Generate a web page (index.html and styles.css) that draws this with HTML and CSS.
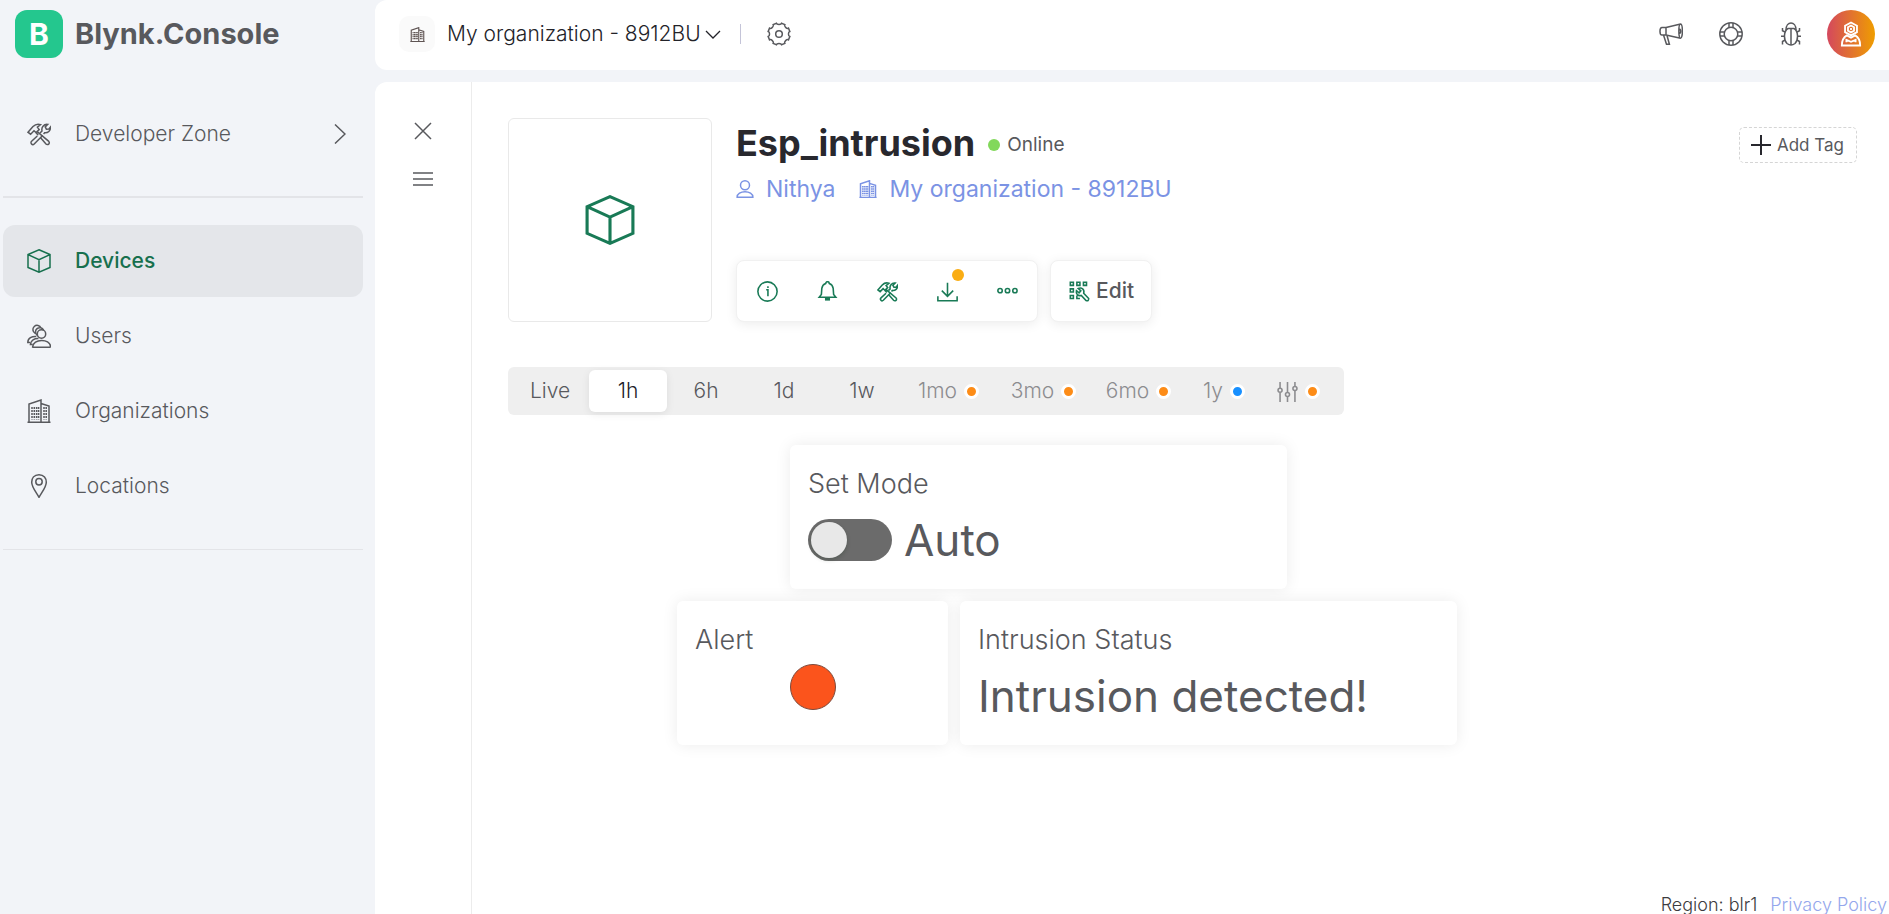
FILE: index.html
```html
<!DOCTYPE html>
<html lang="en">
<head>
<meta charset="utf-8">
<title>Blynk.Console</title>
<link rel="stylesheet" href="styles.css">
</head>
<body>
<svg class="sprite" aria-hidden="true">
  <symbol id="tools" viewBox="0 0 24 24">
    <path d="M1 10.2 6 4.6C8.3 2.2 11 1.7 13.6 2.6L10.4 5.2 12.2 7.6 9 10.6 7 8.8 3.6 12.2Z"/>
    <path d="M10.2 9.6 21.8 19.4A1.9 1.9 0 0 1 19 22L13.4 15.6M11.2 13.2 9 10.6"/>
    <path d="M10.3 14 4.6 19.2A1.9 1.9 0 0 0 7.2 22L15.6 13.4M13 11 15 9C14.200 5.400 16.600 2 20.700 2.400L18.200 4.900 19.400 7.200 21.800 7.100 23.400 5.100C23.800 8.800 20.800 11.200 17.600 10.800L16.600 12"/>
  </symbol>
  <symbol id="cube" viewBox="0 0 24 24">
    <path d="M12 .8 23 5.600V18.400L12 23.200 1 18.400V5.600ZM1 5.600 12 10.600 23 5.600M12 10.600V23.200"/>
  </symbol>
  <symbol id="users" viewBox="0 0 24 24">
    <circle cx="14.500" cy="10" r="4.200"/>
    <path d="M5.600 23C6 14.300 23 14.300 23.500 22.300L23 23.200H6Z"/>
    <path d="M10.400 11.400A4.200 4.200 0 1 1 16.600 6.300M8.200 9.300A4.200 4.200 0 1 1 14 4M5.700 20.600H3.400C3.600 16 7.600 14.400 11.500 14.600M3.200 18.500H.8C.8 14 5 12.200 9.300 12.500"/>
  </symbol>
  <symbol id="building" viewBox="0 0 24 24">
    <path d="M.5 23.200H23.500M2 23V5L14 1V23M14 4.500 22 7V23"/>
    <path d="M5 8V20.500M7.300 8V20.500M9.600 8V20.500M11.600 8V20.500M17 8V20.500M19.200 8V20.500" stroke-dasharray="2 1"/>
  </symbol>
  <symbol id="pin" viewBox="0 0 24 24">
    <path d="M12 .8C7 .8 4.700 4.500 4.700 8.200 4.700 13 9 18 12 23.300 15 18 19.300 13 19.300 8.200 19.300 4.500 17 .8 12 .8Z"/>
    <circle cx="12" cy="7.800" r="3.200"/>
  </symbol>
  <symbol id="gear" viewBox="0 0 24 24">
    <path d="M9.400 1.200C9.800 3 14.200 3 14.600 1.200L17.800 2.500C16.800 4.200 19.800 7.200 21.500 6.200L22.800 9.400C21 9.800 21 14.200 22.800 14.600L21.500 17.800C19.800 16.800 16.800 19.800 17.800 21.500L14.600 22.800C14.200 21 9.800 21 9.400 22.800L6.200 21.500C7.200 19.800 4.200 16.800 2.500 17.800L1.200 14.600C3 14.200 3 9.800 1.200 9.400L2.500 6.200C4.200 7.200 7.200 4.200 6.200 2.500Z"/>
    <circle cx="12" cy="12" r="3.300"/>
  </symbol>
  <symbol id="megaphone" viewBox="0 0 24 24">
    <path d="M7 5.500H3C.3 5.500.3 13 3 13H7ZM7 5.500 21.500 2C24 2 24 16.500 21.500 16.300L7 13M21.500 2C19.300 2 19.300 16.500 21.500 16.300M4.500 13 7.500 22.200H10.400L8 13.500M20 7C22.200 7 22.200 11.500 20 11.500"/>
  </symbol>
  <symbol id="lifebuoy" viewBox="0 0 24 24">
    <circle cx="12" cy="12" r="11.200"/><circle cx="12" cy="12" r="6.800"/>
    <path d="M10 1V5.500M14 1V5.500M10 18.500V23M14 18.500V23M1 10H5.500M1 14H5.500M18.500 10H23M18.500 14H23"/>
  </symbol>
  <symbol id="bug" viewBox="0 0 24 24">
    <path d="M7 8C7 -1.300 17 -1.300 17 8"/>
    <path d="M9 6.500C4.500 9 4.500 18 8 21.500Q12 24.500 16 21.500C19.500 18 19.500 9 15 6.500Z"/>
    <path d="M12 6.500V23M6 10 3.500 8.800V6M18 10 20.500 8.800V6M5.500 14.300H2M18.500 14.300H22M6 18 3.500 19.500V22.500M18 18 20.500 19.500V22.500"/>
  </symbol>
  <symbol id="astronaut" viewBox="0 0 24 28">
    <path d="M12 1.500 18.500 5V12L12 15.500 5.500 12V5ZM12 4.800 15.300 6.700V10.300L12 12.200 8.700 10.300V6.700Z"/>
    <path d="M12 7.500V9.500M7.500 15.500C4 17.500 2 20.500 2 26.500H22C22 20.500 20 17.500 16.500 15.500L12 18ZM7 23V20.500L12 22.500 17 20.500V23"/>
  </symbol>
  <symbol id="person" viewBox="0 0 24 24">
    <circle cx="12" cy="7" r="6"/>
    <path d="M1.500 23C1 13 23 13 22.500 23Z"/>
  </symbol>
  <symbol id="info" viewBox="0 0 24 24">
    <circle cx="12" cy="12" r="11"/>
    <path d="M10.500 10H12.500V17.500M12.500 6V8"/>
  </symbol>
  <symbol id="bell" viewBox="0 0 24 24">
    <path d="M2.500 18.500 5 15.500 5.500 8.500C6 5 8 3.500 10 2.800A2 2 0 0 1 14 2.800C16 3.500 18 5 18.500 8.500L19 15.500 21.500 18.500Z"/>
    <path d="M10 20H14V21.500H10Z"/>
  </symbol>
  <symbol id="download" viewBox="0 0 24 24">
    <path d="M12 2V17M5.500 11 12 17.500 18.500 11M1 17.500V22.500H23V17.500"/>
  </symbol>
  <symbol id="dots" viewBox="0 0 24 24">
    <circle cx="3.500" cy="11" r="2.500"/><circle cx="12" cy="11" r="2.500"/><circle cx="20.500" cy="11" r="2.500"/>
  </symbol>
  <symbol id="widgets" viewBox="0 0 24 24">
    <path d="M1.500 1.500H5V5H1.500ZM9 1.500H12.500V5H9ZM16.500 1.500H20V5H16.500ZM1.500 9H5V12.500H1.500ZM1.500 16.500H5V20H1.500Z"/>
    <path d="M10.500 8.500 13.500 11.200 11.500 13.500 8.500 11C7.500 15 10.500 17.500 14 16.500L19.500 22.300Q22.500 23.500 22.500 20L16.800 14C18 9.500 14.500 7 10.500 8.500ZM9 16.500V20H12.500"/>
  </symbol>
  <symbol id="sliders" viewBox="0 0 24 24">
    <path d="M3.500 1V8M3.500 13V24M12 1V13M12 18V24M20.500 1V6M20.500 11V24"/>
    <circle cx="3.500" cy="10.500" r="2.300"/><circle cx="12" cy="15.500" r="2.300"/><circle cx="20.500" cy="8.500" r="2.300"/>
  </symbol>
</svg>

<div class="app">
  <aside class="sidebar">
    <a class="brand" href="#"><span class="brand-mark">B</span><span class="brand-name">Blynk.Console</span></a>
    <nav class="nav">
      <a class="nav-item zone" href="#">
        <svg class="icon"><use href="#tools"/></svg><span class="nav-label">Developer Zone</span>
        <svg class="zone-arrow" viewBox="0 0 12 20"><path d="M1 .5 11 10 1 19.500"/></svg>
      </a>
      <hr class="rule thick">
      <a class="nav-item active" href="#"><svg class="icon"><use href="#cube"/></svg><span class="nav-label">Devices</span></a>
      <a class="nav-item" href="#"><svg class="icon"><use href="#users"/></svg><span class="nav-label">Users</span></a>
      <a class="nav-item" href="#"><svg class="icon"><use href="#building"/></svg><span class="nav-label">Organizations</span></a>
      <a class="nav-item" href="#"><svg class="icon"><use href="#pin"/></svg><span class="nav-label">Locations</span></a>
      <hr class="rule">
    </nav>
  </aside>

  <div class="workspace">
    <header class="topbar">
      <button class="org-switch" type="button">
        <span class="org-badge"><svg class="icon-sm"><use href="#building"/></svg></span>
        <span>My organization - 8912BU</span>
        <svg class="chevron" viewBox="0 0 16 9"><path d="M1 1 8 8 15 1"/></svg>
      </button>
      <span class="separator"></span>
      <button class="icon-button" type="button" aria-label="Settings"><svg class="icon"><use href="#gear"/></svg></button>
      <div class="top-actions">
        <button class="icon-button" type="button" aria-label="News"><svg class="icon"><use href="#megaphone"/></svg></button>
        <button class="icon-button" type="button" aria-label="Help"><svg class="icon"><use href="#lifebuoy"/></svg></button>
        <button class="icon-button" type="button" aria-label="Report a bug"><svg class="icon"><use href="#bug"/></svg></button>
        <button class="avatar" type="button" aria-label="Profile"><svg class="avatar-icon"><use href="#astronaut"/></svg></button>
      </div>
    </header>

    <div class="panel">
      <div class="rail">
        <button class="icon-button" type="button" aria-label="Close"><svg class="rail-icon" viewBox="0 0 20 20"><path d="M2 2 18 18M18 2 2 18"/></svg></button>
        <button class="icon-button" type="button" aria-label="Device list"><svg class="rail-icon" viewBox="0 0 20 20"><path d="M0 4H20M0 10H20M0 16H20"/></svg></button>
      </div>

      <main class="content">
        <section class="device">
          <div class="device-image"><svg class="device-cube"><use href="#cube"/></svg></div>
          <div class="device-info">
            <div class="title-row">
              <h1 class="device-name">Esp_intrusion</h1>
              <span class="status"><span class="status-dot"></span>Online</span>
              <button class="add-tag" type="button"><svg class="plus" viewBox="0 0 22 22"><path d="M11 1V21M1 11H21"/></svg>Add Tag</button>
            </div>
            <div class="owner-row">
              <a class="owner" href="#"><svg class="icon-meta"><use href="#person"/></svg>Nithya</a>
              <a class="owner" href="#"><svg class="icon-meta"><use href="#building"/></svg>My organization - 8912BU</a>
            </div>
            <div class="tool-row">
              <div class="toolbar">
                <button class="tool" type="button" aria-label="Info"><svg class="icon-tool"><use href="#info"/></svg></button>
                <button class="tool" type="button" aria-label="Notifications"><svg class="icon-tool"><use href="#bell"/></svg></button>
                <button class="tool" type="button" aria-label="Developer tools"><svg class="icon-tool"><use href="#tools"/></svg></button>
                <button class="tool" type="button" aria-label="Download report"><svg class="icon-tool"><use href="#download"/></svg><span class="tool-badge"></span></button>
                <button class="tool" type="button" aria-label="More"><svg class="icon-tool"><use href="#dots"/></svg></button>
              </div>
              <button class="edit" type="button"><svg class="icon-tool"><use href="#widgets"/></svg>Edit</button>
            </div>
          </div>
        </section>

        <div class="periods">
          <button class="period" type="button">Live</button>
          <button class="period selected" type="button">1h</button>
          <button class="period" type="button">6h</button>
          <button class="period" type="button">1d</button>
          <button class="period" type="button">1w</button>
          <button class="period locked" type="button">1mo<span class="plan"></span></button>
          <button class="period locked" type="button">3mo<span class="plan"></span></button>
          <button class="period locked" type="button">6mo<span class="plan"></span></button>
          <button class="period locked short" type="button">1y<span class="plan blue"></span></button>
          <button class="period locked custom" type="button" aria-label="Custom range"><svg class="icon-tool"><use href="#sliders"/></svg><span class="plan"></span></button>
        </div>

        <section class="dashboard">
          <article class="widget mode">
            <h2 class="widget-title">Set Mode</h2>
            <label class="switch-row"><input class="switch" type="checkbox"><span class="value">Auto</span></label>
          </article>
          <article class="widget alert">
            <h2 class="widget-title">Alert</h2>
            <span class="led"></span>
          </article>
          <article class="widget state">
            <h2 class="widget-title">Intrusion Status</h2>
            <p class="value">Intrusion detected!</p>
          </article>
        </section>

        <footer class="footer"><span>Region: blr1</span><a class="policy" href="#">Privacy Policy</a></footer>
      </main>
    </div>
  </div>
</div>
</body>
</html>
```

FILE: styles.css
```css
* { box-sizing: border-box; }

body {
  margin: 0;
  background: #f2f4f8;
  color: #58595d;
  font-family: Inter, "Liberation Sans", sans-serif;
  font-size: 21px;
  font-weight: 300;
  line-height: 28px;
}

a { color: inherit; text-decoration: none; }

button {
  padding: 0;
  border: 0;
  background: none;
  color: inherit;
  font: inherit;
  cursor: pointer;
}

h1, h2, p { margin: 0; }

svg {
  display: block;
  flex: none;
  fill: none;
  stroke: currentColor;
  stroke-width: 1.5;
}

.sprite { position: absolute; width: 0; height: 0; }
.icon { width: 24px; height: 24px; }
.icon-sm { width: 15px; height: 15px; color: #5f5453; stroke-width: 1.8; }
.icon-meta { width: 18px; height: 18px; stroke-width: 2; }
.icon-tool { width: 21px; height: 21px; stroke-width: 1.8; }

.app { display: flex; min-height: 100vh; }

/* Sidebar */
.sidebar { flex: none; width: 375px; padding: 10px 12px 0 3px; }

.brand { display: flex; align-items: center; gap: 12px; padding-left: 12px; }

.brand-mark {
  width: 48px;
  height: 48px;
  border-radius: 12px;
  background: #24c78e;
  color: #fff;
  font-size: 30px;
  font-weight: 700;
  line-height: 48px;
  text-align: center;
}

.brand-name { font-size: 29px; font-weight: 700; line-height: 48px; }

.nav { display: flex; flex-direction: column; gap: 3px; padding-top: 40px; }

.nav-item {
  display: flex;
  align-items: center;
  gap: 24px;
  height: 72px;
  padding: 0 17px 0 24px;
  border-radius: 12px;
}

.nav-item.active { background: #e4e6ea; color: #17704e; font-weight: 500; }
.zone-arrow { width: 12px; height: 20px; margin-left: auto; }

.rule { width: 100%; height: 1px; margin: 24px 0; border: 0; background: #e3e4e8; }
.rule.thick { height: 2px; margin: 23px 0 24px; }

/* Top bar */
.workspace { display: flex; flex: 1; flex-direction: column; gap: 12px; min-width: 0; }

.topbar {
  display: flex;
  align-items: center;
  height: 70px;
  padding: 0 14px 2px 24px;
  border-radius: 12px 0 0 12px;
  background: #fff;
}

.org-switch { display: flex; align-items: center; gap: 4px; color: #232329; }

.org-badge {
  display: grid;
  place-items: center;
  width: 36px;
  height: 36px;
  margin-right: 8px;
  border-radius: 10px;
  background: #fafafa;
}

.chevron { width: 16px; height: 9px; stroke-width: 1.3; }
.separator { width: 1px; height: 20px; margin: 0 26px 0 19px; background: #c4c4d8; }
.icon-button { display: grid; place-items: center; }
.top-actions { display: flex; align-items: center; gap: 36px; margin-left: auto; }

.avatar {
  display: grid;
  place-items: center;
  width: 48px;
  height: 48px;
  margin-left: -12px;
  border-radius: 50%;
  background: linear-gradient(90deg, #d4485e, #ef9d00);
  color: #fff;
}

.avatar-icon { width: 22px; height: 26px; stroke-width: 2; }

/* Device page */
.panel { display: flex; flex: 1; border-radius: 12px 0 0 0; background: #fff; }

.rail {
  display: flex;
  flex: none;
  flex-direction: column;
  align-items: center;
  gap: 28px;
  width: 97px;
  padding-top: 39px;
  border-right: 1px solid #ececec;
}

.rail-icon { width: 20px; height: 20px; }

.content { display: flex; flex: 1; flex-direction: column; min-width: 0; padding-top: 36px; }

.device { display: flex; gap: 24px; padding: 0 32px 0 36px; }

.device-image {
  display: grid;
  flex: none;
  place-items: center;
  width: 204px;
  height: 204px;
  border: 1px solid #e9e9e9;
  border-radius: 6px;
  color: #197a56;
}

.device-cube { width: 50px; height: 50px; }
.device-info { display: flex; flex: 1; flex-direction: column; min-width: 0; }
.title-row { display: flex; align-items: center; gap: 13px; padding-top: 2px; }

.device-name { color: #28282e; font-size: 36px; font-weight: 700; line-height: 46px; }

.status { display: flex; align-items: center; gap: 7px; padding-top: 4px; font-size: 19px; font-weight: 400; }
.status-dot { width: 12px; height: 12px; border-radius: 50%; background: #82d85b; }

.add-tag {
  display: flex;
  align-items: center;
  gap: 5px;
  height: 36px;
  margin: 4px 0 0 auto;
  padding: 0 12px 0 10px;
  border: 1px dashed #d5d5d5;
  border-radius: 5px;
  font-size: 17px;
  font-weight: 400;
}

.plus { width: 22px; height: 22px; stroke: #28282e; stroke-width: 2; }

.owner-row {
  display: flex;
  gap: 24px;
  padding-top: 7px;
  color: #7b93e4;
  font-size: 23px;
  font-weight: 400;
  line-height: 32px;
}

.owner { display: flex; align-items: center; gap: 12px; }

.tool-row { display: flex; gap: 12px; margin-top: auto; }

.toolbar,
.edit {
  display: flex;
  align-items: center;
  height: 62px;
  border: 1px solid #f1f1f1;
  border-radius: 8px;
  background: #fff;
  box-shadow: 0 2px 12px rgba(0, 0, 0, 0.08);
}

.tool {
  position: relative;
  display: grid;
  place-items: center;
  width: 60px;
  height: 60px;
  color: #197a56;
}

.tool-badge {
  position: absolute;
  top: 8px;
  right: 13px;
  width: 12px;
  height: 12px;
  border-radius: 50%;
  background: #faad14;
}

.edit { gap: 6px; padding: 0 17px 0 18px; font-weight: 500; }
.edit .icon-tool { color: #197a56; }

.periods {
  display: flex;
  align-self: flex-start;
  margin: 45px 0 0 36px;
  padding: 3px;
  border-radius: 6px;
  background: #efefef;
}

.period {
  display: flex;
  align-items: center;
  justify-content: center;
  gap: 7px;
  width: 78px;
  height: 42px;
  border-radius: 6px;
}

.period.selected { background: #fff; color: #232329; box-shadow: 0 2px 8px rgba(0, 0, 0, 0.08); }
.period.locked { width: 95px; color: #8c8c8f; }
.period.short { width: 76px; }
.period.custom { width: 79px; padding-right: 6px; }

.plan {
  width: 15px;
  height: 15px;
  border: 3px solid #fff;
  border-radius: 50%;
  background: #fd8c17;
}

.plan.blue { background: #1890ff; }

/* Widgets */
.dashboard {
  display: grid;
  grid-template-columns: 113fr 158fr 12fr 327fr 170fr;
  row-gap: 12px;
  max-width: 780px;
  width: 100%;
  margin: 30px 0 40px 205px;
}

.widget {
  display: flex;
  flex-direction: column;
  min-height: 144px;
  padding: 21px 18px 19px;
  border-radius: 6px;
  background: #fff;
  box-shadow: 0 0 16px rgba(0, 0, 0, 0.08);
}

.mode { grid-column: 2 / 5; }
.alert { grid-column: 1 / 3; }
.state { grid-column: 4 / 6; }

.widget-title { font-size: 27px; font-weight: 300; line-height: 36px; }
.value { font-size: 44px; font-weight: 400; line-height: 56px; }
.state .value { margin-top: 10px; }
.switch-row { display: flex; align-items: center; gap: 12px; margin-top: 10px; }

.switch {
  appearance: none;
  display: flex;
  align-items: center;
  width: 84px;
  height: 42px;
  margin: 0;
  padding: 3px;
  border-radius: 21px;
  background: #6b6b6b;
}

.switch::before {
  content: "";
  width: 36px;
  height: 36px;
  border-radius: 50%;
  background: #e8e8e8;
  box-shadow: 0 2px 4px rgba(0, 35, 11, 0.2);
}

.switch:checked::before { margin-left: auto; }

.led {
  align-self: center;
  width: 46px;
  height: 46px;
  margin-top: 6px;
  border: 1px solid #7c4a3c;
  border-radius: 50%;
  background: #fb541c;
}

.footer {
  display: flex;
  gap: 13px;
  justify-content: flex-end;
  margin-top: auto;
  padding-right: 2px;
  color: #3c3c40;
  font-size: 18px;
  line-height: 18px;
}

.policy { color: #94a7ec; }
```
